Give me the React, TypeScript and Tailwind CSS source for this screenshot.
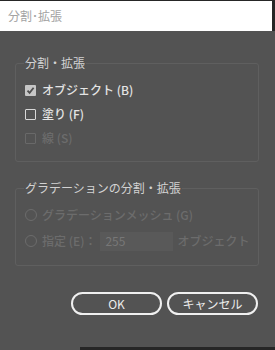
const font = "font-['Noto_Sans_CJK_JP','Noto_Sans',sans-serif]";

type BoxProps = { checked?: boolean; disabled?: boolean };

const CheckBox = ({ checked, disabled }: BoxProps) => {
  if (checked) {
    return (
      <div className="w-[11px] h-[11px] bg-[#c6c6c6] rounded-[1px] flex items-center justify-center">
        <svg width="9" height="9" viewBox="0 0 9 9">
          <path d="M1.5 4.6 L3.6 6.8 L7.6 1.8" stroke="#4e4e4e" strokeWidth="1.8" fill="none" />
        </svg>
      </div>
    );
  }
  return (
    <div
      className={
        disabled
          ? "w-[11px] h-[11px] border border-[#696969] rounded-[1px]"
          : "w-[11px] h-[11px] border border-[#d8d8d8] rounded-[1px]"
      }
    />
  );
};

const Radio = () => <div className="w-[12px] h-[12px] rounded-full border border-[#6c6c6c]" />;

const App = () => {
  return (
    <div className={`w-[275px] h-[350px] flex flex-col bg-[#535353] ${font}`}>
      {/* title bar */}
      <div className="h-[31px] shrink-0 flex border-t border-[#262626]">
        <div className="flex-1 bg-[#ffffff] flex items-center pl-[8px] pb-[1px]">
          <p className="bg-[#ffffff] text-[12px] leading-[16px] text-[#a3a3a3]">分割･拡張</p>
        </div>
        <div className="w-[3px] bg-[#262626]" />
      </div>

      <div className="flex-1 flex flex-col">
        <fieldset className="mt-[24px] ml-[15px] mr-[16px] border border-[#5f5f5f] rounded-[3px] px-[8px] pt-[7px] pb-[11px]">
          <legend className="text-[12px] leading-[16px] text-[#d2d2d2] px-[1px]">分割・拡張</legend>
          <div className="flex flex-col">
            <div className="h-6 flex items-center gap-[6px] pl-[1px]">
              <CheckBox checked />
              <span className="text-[12px] font-medium text-[#e4e4e4]">オブジェクト (B)</span>
            </div>
            <div className="h-6 flex items-center gap-[6px] pl-[1px]">
              <CheckBox />
              <span className="text-[12px] font-medium text-[#e4e4e4]">塗り (F)</span>
            </div>
            <div className="h-6 flex items-center gap-[6px] pl-[1px]">
              <CheckBox disabled />
              <span className="text-[12px] font-medium text-[#6c6c6c]">線 (S)</span>
            </div>
          </div>
        </fieldset>

        <fieldset className="mt-[18px] ml-[15px] mr-[16px] border border-[#5f5f5f] rounded-[3px] px-[8px] pt-[7px] pb-[10px]">
          <legend className="text-[12px] leading-[16px] text-[#d2d2d2] px-[1px]">グラデーションの分割・拡張</legend>
          <div className="flex flex-col">
            <div className="h-6 flex items-center gap-[5px] pl-[1px]">
              <Radio />
              <span className="text-[12px] font-medium text-[#6c6c6c]">グラデーションメッシュ (G)</span>
            </div>
            <div className="h-[28px] flex items-center pl-[1px]">
              <Radio />
              <span className="ml-[5px] text-[12px] font-medium text-[#6c6c6c]">指定 (E)：</span>
              <div className="ml-[4px] w-[73px] h-[19px] bg-[#595959] flex items-center pl-[5px] text-[12px] text-[#777777]">
                255
              </div>
              <span className="ml-[4px] text-[12px] font-medium text-[#6c6c6c]">オブジェクト</span>
            </div>
          </div>
        </fieldset>

        <div className="mt-[26px] mr-[17px] flex justify-end gap-[5px]">
          <button className="w-[91px] h-[23px] rounded-full border-2 border-[#f0f0f0] text-[12px] text-[#ececec] flex items-center justify-center">
            OK
          </button>
          <button className="w-[91px] h-[23px] rounded-full border-2 border-[#f0f0f0] text-[12px] text-[#ececec] flex items-center justify-center">
            キャンセル
          </button>
        </div>
      </div>

      {/* strip below the dialog */}
      <div className="h-[3px] flex shrink-0">
        <div className="w-20" />
        <div className="flex-1 bg-[#262626]" />
      </div>
    </div>
  );
};

export default App;
